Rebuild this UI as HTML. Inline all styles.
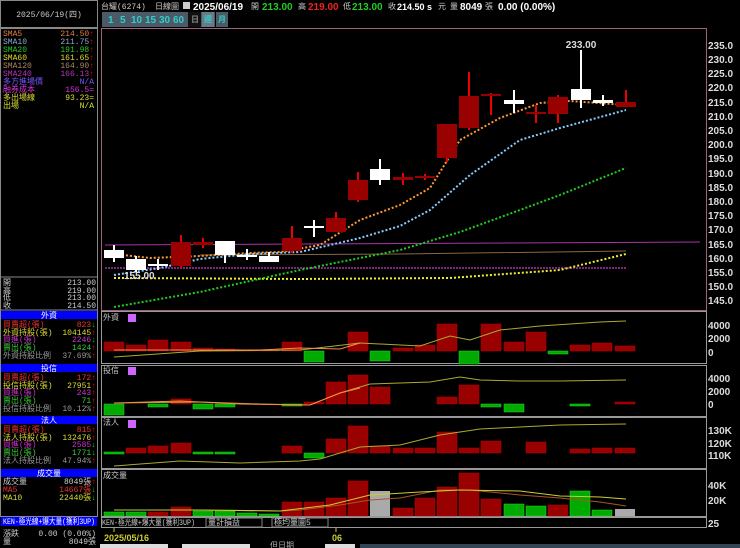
<!DOCTYPE html><html><head><meta charset="utf-8"><style>
body{margin:0;background:#000;width:740px;height:548px;overflow:hidden;font-family:"Liberation Sans","Noto Sans CJK TC",sans-serif}
svg{position:absolute;left:0;top:0}
.t{font-family:"Liberation Mono","Noto Sans CJK TC",monospace;font-size:8px}
.ax{font-family:"Liberation Sans",sans-serif;font-size:10px;font-weight:bold;fill:#ddd}
</style></head><body>
<svg width="740" height="548" viewBox="0 0 740 548">
<rect x="0.5" y="0.5" width="97" height="27" fill="none" stroke="#888"/>
<text x="49" y="17" class="t" fill="#ccc" text-anchor="middle">2025/06/19(四)</text>
<rect x="0.5" y="28.5" width="97" height="488" fill="none" stroke="#888"/>
<g class="t">
<text x="3" y="36" fill="#e08040">SMA5</text><text x="94" y="36" fill="#e08040" text-anchor="end">214.50<tspan fill="#f00">↑</tspan></text>
<text x="3" y="44" fill="#8ac">SMA10</text><text x="94" y="44" fill="#8ac" text-anchor="end">211.75<tspan fill="#f00">↑</tspan></text>
<text x="3" y="52" fill="#2c2">SMA20</text><text x="94" y="52" fill="#2c2" text-anchor="end">191.98<tspan fill="#f00">↑</tspan></text>
<text x="3" y="60" fill="#dd3">SMA60</text><text x="94" y="60" fill="#dd3" text-anchor="end">161.65<tspan fill="#f00">↑</tspan></text>
<text x="3" y="68" fill="#a86">SMA120</text><text x="94" y="68" fill="#a86" text-anchor="end">164.90<tspan fill="#f00">↑</tspan></text>
<text x="3" y="76" fill="#b3b">SMA240</text><text x="94" y="76" fill="#b3b" text-anchor="end">166.13<tspan fill="#f00">↑</tspan></text>
<text x="3" y="84" fill="#75f">多方進場價</text><text x="94" y="84" fill="#75f" text-anchor="end">N/A</text>
<text x="3" y="92" fill="#d3d">融券成本</text><text x="94" y="92" fill="#d3d" text-anchor="end">156.5=</text>
<text x="3" y="100" fill="#dd3">多出場線</text><text x="94" y="100" fill="#dd3" text-anchor="end">93.23=</text>
<text x="3" y="108" fill="#dd3">出場</text><text x="94" y="108" fill="#dd3" text-anchor="end">N/A</text>
</g>
<line x1="0" y1="277" x2="98" y2="277" stroke="#888"/>
<g class="t" fill="#ccc">
<text x="3" y="285">開</text><text x="96" y="285" text-anchor="end">213.00</text>
<text x="3" y="293">高</text><text x="96" y="293" text-anchor="end">219.00</text>
<text x="3" y="300">低</text><text x="96" y="300" text-anchor="end">213.00</text>
<text x="3" y="308">收</text><text x="96" y="308" text-anchor="end">214.50</text>
</g>
<line x1="0" y1="310" x2="98" y2="310" stroke="#888"/>
<g class="t" font-size="7.5">
<rect x="1" y="311" width="96" height="8" fill="#00f"/><text x="49" y="318" fill="#fff" text-anchor="middle">外資</text>
<text x="3" y="327" fill="#e33">買賣超(張)</text><text x="96" y="327" fill="#e33" text-anchor="end">823<tspan fill="#0c0">↓</tspan></text>
<text x="3" y="335" fill="#dd3">外資持股(張)</text><text x="96" y="335" fill="#dd3" text-anchor="end">104145<tspan fill="#f00">↑</tspan></text>
<text x="3" y="342" fill="#c3c">買進(張)</text><text x="96" y="342" fill="#c3c" text-anchor="end">2246<tspan fill="#0c0">↓</tspan></text>
<text x="3" y="350" fill="#3c3">賣出(張)</text><text x="96" y="350" fill="#3c3" text-anchor="end">1424<tspan fill="#f00">↑</tspan></text>
<text x="3" y="358" fill="#999">外資持股比例</text><text x="96" y="358" fill="#999" text-anchor="end">37.69%<tspan fill="#f00">↑</tspan></text>
<rect x="1" y="364" width="96" height="8" fill="#00f"/><text x="49" y="371" fill="#fff" text-anchor="middle">投信</text>
<text x="3" y="380" fill="#e33">買賣超(張)</text><text x="96" y="380" fill="#e33" text-anchor="end">172<tspan fill="#f00">↑</tspan></text>
<text x="3" y="388" fill="#dd3">投信持股(張)</text><text x="96" y="388" fill="#dd3" text-anchor="end">27951<tspan fill="#f00">↑</tspan></text>
<text x="3" y="395" fill="#c3c">買進(張)</text><text x="96" y="395" fill="#c3c" text-anchor="end">243<tspan fill="#f00">↑</tspan></text>
<text x="3" y="403" fill="#3c3">賣出(張)</text><text x="96" y="403" fill="#3c3" text-anchor="end">71<tspan fill="#f00">↑</tspan></text>
<text x="3" y="411" fill="#999">投信持股比例</text><text x="96" y="411" fill="#999" text-anchor="end">10.12%<tspan fill="#f00">↑</tspan></text>
<rect x="1" y="416" width="96" height="8" fill="#00f"/><text x="49" y="423" fill="#fff" text-anchor="middle">法人</text>
<text x="3" y="432" fill="#e33">買賣超(張)</text><text x="96" y="432" fill="#e33" text-anchor="end">815<tspan fill="#f00">↑</tspan></text>
<text x="3" y="440" fill="#dd3">法人持股(張)</text><text x="96" y="440" fill="#dd3" text-anchor="end">132476<tspan fill="#f00">↑</tspan></text>
<text x="3" y="447" fill="#c3c">買進(張)</text><text x="96" y="447" fill="#c3c" text-anchor="end">2585<tspan fill="#0c0">↓</tspan></text>
<text x="3" y="455" fill="#3c3">賣出(張)</text><text x="96" y="455" fill="#3c3" text-anchor="end">1771<tspan fill="#0c0">↓</tspan></text>
<text x="3" y="463" fill="#999">法人持股比例</text><text x="96" y="463" fill="#999" text-anchor="end">47.94%<tspan fill="#f00">↑</tspan></text>
<rect x="1" y="469" width="96" height="8" fill="#00f"/><text x="49" y="476" fill="#fff" text-anchor="middle">成交量</text>
<text x="3" y="484" fill="#ccc">成交量</text><text x="96" y="484" fill="#ccc" text-anchor="end">8049張<tspan fill="#f00">↑</tspan></text>
<text x="3" y="492" fill="#e33">MA5</text><text x="96" y="492" fill="#e33" text-anchor="end">14667張<tspan fill="#0c0">↓</tspan></text>
<text x="3" y="500" fill="#dd3">MA10</text><text x="96" y="500" fill="#dd3" text-anchor="end">22440張<tspan fill="#0c0">↓</tspan></text>
<rect x="1" y="517" width="96" height="9" fill="#00f"/><text x="3" y="524" fill="#fff" textLength="92" lengthAdjust="spacingAndGlyphs">KEN-極光線+爆大量(獲利3UP)</text>
<text x="3" y="536" fill="#ccc">漲跌</text><text x="96" y="536" fill="#ccc" text-anchor="end">0.00 (0.00%)</text>
<text x="3" y="544" fill="#ccc">量</text><text x="96" y="544" fill="#ccc" text-anchor="end">8049張</text>
</g>
<g font-size="9">
<text x="101" y="9" class="t" fill="#ccc">台耀(6274)</text>
<text x="155" y="9" class="t" fill="#ccc">日線圖</text>
<rect x="183" y="2" width="7" height="7" fill="#ccc"/>
<text x="193" y="10" fill="#fff" font-weight="bold" font-size="10">2025/06/19</text>
<text x="251" y="9" class="t" fill="#ccc">開</text><text x="262" y="10" fill="#2c2" font-weight="bold" font-size="10">213.00</text>
<text x="298" y="9" class="t" fill="#ccc">高</text><text x="308" y="10" fill="#e22" font-weight="bold" font-size="10">219.00</text>
<text x="343" y="9" class="t" fill="#ccc">低</text><text x="352" y="10" fill="#2c2" font-weight="bold" font-size="10">213.00</text>
<text x="388" y="9" class="t" fill="#ccc">收</text><text x="397" y="10" fill="#fff" font-weight="bold" font-size="9">214.50 s</text>
<text x="438" y="9" class="t" fill="#ccc">元</text><text x="450" y="9" class="t" fill="#ccc">量</text>
<text x="460" y="10" fill="#fff" font-weight="bold" font-size="10">8049</text>
<text x="485" y="9" class="t" fill="#ccc">張</text>
<text x="498" y="10" fill="#fff" font-weight="bold" font-size="10">0.00 (0.00%)</text>
</g>
<g font-size="10" font-weight="bold" fill="#3cc">
<rect x="102" y="12" width="113" height="15" fill="#4a5a66"/>
<text x="108" y="23">1</text><text x="120" y="23">5</text><text x="131" y="23">10</text><text x="145" y="23">15</text><text x="159" y="23">30</text><text x="173" y="23">60</text>
<rect x="188" y="12" width="13" height="15" fill="#111"/><text x="191" y="22" class="t" fill="#888">日</text>
<rect x="202" y="12" width="12" height="15" fill="#6a7a86"/><text x="204" y="22" class="t" fill="#3cc">週</text>
<rect x="216" y="12" width="12" height="15" fill="#4a5a66"/><text x="218" y="22" class="t" fill="#3cc">月</text>
</g>
<rect x="101.5" y="28.5" width="605" height="282" fill="none" stroke="#a0607a"/>
<rect x="101.5" y="311.5" width="605" height="52" fill="none" stroke="#999"/>
<rect x="101.5" y="365.5" width="605" height="51" fill="none" stroke="#999"/>
<rect x="101.5" y="417.5" width="605" height="51" fill="none" stroke="#999"/>
<rect x="101.5" y="469.5" width="605" height="47" fill="none" stroke="#999"/>
<rect x="101.5" y="517.5" width="605" height="10" fill="none" stroke="#999"/>
<g class="ax">
<text x="708" y="49">235.0</text><text x="708" y="63">230.0</text><text x="708" y="77">225.0</text><text x="708" y="91">220.0</text><text x="708" y="106">215.0</text><text x="708" y="120">210.0</text><text x="708" y="134">205.0</text><text x="708" y="148">200.0</text><text x="708" y="162">195.0</text><text x="708" y="177">190.0</text><text x="708" y="191">185.0</text><text x="708" y="205">180.0</text><text x="708" y="219">175.0</text><text x="708" y="233">170.0</text><text x="708" y="248">165.0</text><text x="708" y="262">160.0</text><text x="708" y="276">155.0</text><text x="708" y="290">150.0</text><text x="708" y="304">145.0</text>
<text x="708" y="329">4000</text><text x="708" y="342">2000</text><text x="708" y="356">0</text>
<text x="708" y="382">4000</text><text x="708" y="395">2000</text><text x="708" y="408">0</text>
<text x="708" y="434">130K</text><text x="708" y="447">120K</text><text x="708" y="459">110K</text>
<text x="708" y="489">40K</text><text x="708" y="504">20K</text><text x="708" y="527">25</text>
</g>
<polyline points="105,245 700,242" stroke="#a3a" stroke-width="1" fill="none"/>
<polyline points="105,268 626,268" stroke="#a3a" stroke-width="1.5" stroke-dasharray="2,1" fill="none"/>
<polyline points="200,255 400,254 626,251" stroke="#864" fill="none"/>
<polyline points="114,278 300,279 450,278 560,270 626,254" stroke="#ee3" stroke-width="2" stroke-dasharray="2,2" fill="none"/>
<polyline points="114,307 200,292 300,270 400,250 460,232 520,210 560,195 626,168" stroke="#2c2" stroke-width="2" stroke-dasharray="2,2" fill="none"/>
<polyline points="114,275 160,268 200,259 250,254 300,252 360,238 400,226 430,210 470,175 520,140 560,128 626,110" stroke="#8cf" stroke-width="2" stroke-dasharray="2,2" fill="none"/>
<polyline points="114,254 150,258 200,256 250,253 280,252 320,245 360,220 400,205 430,188 460,140 500,118 540,103 570,101 626,105" stroke="#f93" stroke-width="2" stroke-dasharray="2,2" fill="none"/>
<g stroke-width="2">
<line x1="114" y1="245" x2="114" y2="262" stroke="#fff"/><rect x="104" y="250" width="20" height="8" fill="#fff"/>
<line x1="136" y1="256" x2="136" y2="272" stroke="#fff"/><rect x="126" y="259" width="20" height="11" fill="#fff"/>
<line x1="158" y1="259" x2="158" y2="270" stroke="#fff"/><rect x="148" y="264" width="20" height="2" fill="#fff"/>
<line x1="181" y1="235" x2="181" y2="268" stroke="#e00"/><rect x="171" y="242" width="20" height="24" fill="#900"/>
<line x1="203" y1="238" x2="203" y2="248" stroke="#e00"/><rect x="193" y="242" width="20" height="3" fill="#900"/>
<line x1="225" y1="241" x2="225" y2="263" stroke="#fff"/><rect x="215" y="241" width="20" height="14" fill="#fff"/>
<line x1="247" y1="249" x2="247" y2="260" stroke="#fff"/><rect x="237" y="255" width="20" height="2" fill="#fff"/>
<line x1="269" y1="252" x2="269" y2="262" stroke="#fff"/><rect x="259" y="256" width="20" height="6" fill="#fff"/>
<line x1="292" y1="226" x2="292" y2="253" stroke="#e00"/><rect x="282" y="238" width="20" height="13" fill="#900"/>
<line x1="314" y1="220" x2="314" y2="237" stroke="#fff"/><rect x="304" y="226" width="20" height="2" fill="#fff"/>
<line x1="336" y1="212" x2="336" y2="232" stroke="#e00"/><rect x="326" y="218" width="20" height="14" fill="#900"/>
<line x1="358" y1="172" x2="358" y2="202" stroke="#e00"/><rect x="348" y="180" width="20" height="20" fill="#900"/>
<line x1="380" y1="159" x2="380" y2="185" stroke="#fff"/><rect x="370" y="169" width="20" height="11" fill="#fff"/>
<line x1="403" y1="173" x2="403" y2="185" stroke="#e00"/><rect x="393" y="177" width="20" height="3" fill="#900"/>
<line x1="425" y1="174" x2="425" y2="180" stroke="#e00"/><rect x="415" y="176" width="20" height="2" fill="#900"/>
<line x1="447" y1="124" x2="447" y2="162" stroke="#e00"/><rect x="437" y="124" width="20" height="34" fill="#900"/>
<line x1="469" y1="72" x2="469" y2="130" stroke="#e00"/><rect x="459" y="96" width="20" height="32" fill="#900"/>
<line x1="491" y1="93" x2="491" y2="115" stroke="#e00"/><rect x="481" y="94" width="20" height="2" fill="#900"/>
<line x1="514" y1="90" x2="514" y2="113" stroke="#fff"/><rect x="504" y="100" width="20" height="4" fill="#fff"/>
<line x1="536" y1="105" x2="536" y2="123" stroke="#e00"/><rect x="526" y="112" width="20" height="2" fill="#900"/>
<line x1="558" y1="95" x2="558" y2="123" stroke="#e00"/><rect x="548" y="97" width="20" height="17" fill="#900"/>
<line x1="581" y1="50" x2="581" y2="108" stroke="#fff"/><rect x="571" y="89" width="20" height="11" fill="#fff"/>
<line x1="603" y1="95" x2="603" y2="106" stroke="#fff"/><rect x="593" y="100" width="20" height="3" fill="#fff"/>
<line x1="626" y1="90" x2="626" y2="106" stroke="#e00"/><rect x="616" y="102" width="20" height="5" fill="#900"/>
</g>
<text x="581" y="48" class="ax" text-anchor="middle" font-size="9">233.00</text>
<text x="124" y="279" class="ax" font-size="9" fill="#ccc">155.00</text>
<g class="t" fill="#ccc"><text x="103" y="320">外資</text><text x="103" y="373">投信</text><text x="103" y="425">法人</text><text x="103" y="478">成交量</text></g>
<rect x="128" y="314" width="8" height="8" fill="#c6f"/><rect x="128" y="367" width="8" height="8" fill="#c6f"/><rect x="128" y="420" width="8" height="8" fill="#c6f"/>
<g fill="#900" stroke="#b00" stroke-width="0.5">
<rect x="104" y="342" width="20" height="9"/><rect x="126" y="345" width="20" height="6"/><rect x="148" y="340" width="20" height="11"/><rect x="171" y="342" width="20" height="9"/><rect x="193" y="348" width="20" height="3"/><rect x="215" y="349" width="20" height="2"/><rect x="237" y="350" width="20" height="1"/><rect x="259" y="350" width="20" height="1"/><rect x="282" y="342" width="20" height="9"/><rect x="348" y="332" width="20" height="19"/><rect x="393" y="348" width="20" height="3"/><rect x="415" y="345" width="20" height="6"/><rect x="437" y="324" width="20" height="27"/><rect x="481" y="324" width="20" height="27"/><rect x="504" y="342" width="20" height="9"/><rect x="526" y="332" width="20" height="19"/><rect x="570" y="345" width="20" height="6"/><rect x="592" y="343" width="20" height="8"/><rect x="615" y="346" width="20" height="5"/>
</g>
<g fill="#0a0" stroke="#2d2" stroke-width="0.5"><rect x="304" y="351" width="20" height="11"/><rect x="370" y="351" width="20" height="10"/><rect x="459" y="351" width="20" height="13"/><rect x="548" y="351" width="20" height="3"/></g>
<polyline points="114,357 200,351 300,350 360,343 420,346 450,336 470,340 500,330 540,326 600,322 626,321" stroke="#aa3" fill="none"/>
<polyline points="114,350 200,350 260,350 300,348 340,349 360,343" stroke="#f84" fill="none"/>
<g fill="#900" stroke="#b00" stroke-width="0.5">
<rect x="171" y="399" width="20" height="5"/><rect x="304" y="402" width="20" height="2"/><rect x="326" y="382" width="20" height="22"/><rect x="348" y="375" width="20" height="29"/><rect x="370" y="387" width="20" height="17"/><rect x="437" y="397" width="20" height="7"/><rect x="459" y="385" width="20" height="19"/><rect x="615" y="402" width="20" height="2"/>
</g>
<g fill="#0a0" stroke="#2d2" stroke-width="0.5"><rect x="104" y="404" width="20" height="11"/><rect x="148" y="404" width="20" height="3"/><rect x="193" y="404" width="20" height="5"/><rect x="215" y="404" width="20" height="3"/><rect x="282" y="404" width="20" height="2"/><rect x="481" y="404" width="20" height="3"/><rect x="504" y="404" width="20" height="8"/><rect x="570" y="404" width="20" height="2"/></g>
<polyline points="114,403 200,402 260,404 310,405 340,393 370,384 400,383 430,382 460,377 480,380 520,381 560,381 626,380" stroke="#aa3" fill="none"/>
<polyline points="114,403 180,401 240,404 310,405 340,393 360,388" stroke="#f84" fill="none"/>
<g fill="#900" stroke="#b00" stroke-width="0.5">
<rect x="126" y="448" width="20" height="5"/><rect x="148" y="446" width="20" height="7"/><rect x="171" y="443" width="20" height="10"/><rect x="282" y="446" width="20" height="7"/><rect x="326" y="439" width="20" height="14"/><rect x="348" y="426" width="20" height="27"/><rect x="370" y="446" width="20" height="7"/><rect x="393" y="448" width="20" height="5"/><rect x="415" y="448" width="20" height="5"/><rect x="437" y="432" width="20" height="21"/><rect x="459" y="448" width="20" height="5"/><rect x="481" y="441" width="20" height="12"/><rect x="526" y="442" width="20" height="11"/><rect x="570" y="449" width="20" height="4"/><rect x="592" y="448" width="20" height="5"/><rect x="615" y="448" width="20" height="5"/>
</g>
<g fill="#0a0" stroke="#2d2" stroke-width="0.5"><rect x="104" y="452" width="20" height="2"/><rect x="193" y="452" width="20" height="2"/><rect x="215" y="452" width="20" height="2"/><rect x="304" y="453" width="20" height="5"/></g>
<polyline points="114,466 180,461 240,463 300,461 320,459 360,447 400,445 440,435 480,429 520,427 560,425 626,424" stroke="#aa3" fill="none"/>
<g fill="#900" stroke="#b00" stroke-width="0.5">
<rect x="148" y="512" width="20" height="4"/><rect x="171" y="507" width="20" height="9"/><rect x="282" y="502" width="20" height="14"/><rect x="304" y="502" width="20" height="14"/><rect x="326" y="498" width="20" height="18"/><rect x="348" y="481" width="20" height="35"/><rect x="393" y="508" width="20" height="8"/><rect x="415" y="498" width="20" height="18"/><rect x="437" y="487" width="20" height="29"/><rect x="459" y="473" width="20" height="43"/><rect x="481" y="499" width="20" height="17"/><rect x="548" y="505" width="20" height="11"/>
</g>
<g fill="#0a0" stroke="#2d2" stroke-width="0.5"><rect x="104" y="512" width="20" height="4"/><rect x="126" y="512" width="20" height="4"/><rect x="193" y="511" width="20" height="5"/><rect x="215" y="511" width="20" height="5"/><rect x="237" y="513" width="20" height="3"/><rect x="259" y="514" width="20" height="2"/><rect x="504" y="504" width="20" height="12"/><rect x="526" y="506" width="20" height="10"/><rect x="570" y="491" width="20" height="25"/><rect x="592" y="510" width="20" height="6"/></g>
<g fill="#aaa"><rect x="370" y="491" width="20" height="25"/><rect x="615" y="509" width="20" height="7"/></g>
<polyline points="114,510 200,510 280,511 300,510 340,505 370,500 400,498 440,490 470,490 520,495 560,498 600,502 626,506" stroke="#a52" fill="none"/>
<polyline points="114,510 200,510 280,511 330,505 370,495 420,492 460,490 520,491 560,496 600,497 626,499" stroke="#cc3" fill="none"/>
<text x="102" y="525" class="t" fill="#ccc" font-size="7" textLength="93" lengthAdjust="spacingAndGlyphs">KEN-極光線+爆大量(獲利3UP)</text>
<rect x="206" y="518" width="56" height="9" fill="none" stroke="#888"/><text x="208" y="525" class="t" fill="#ccc" font-size="7">量計損益</text>
<rect x="272" y="518" width="56" height="9" fill="none" stroke="#888"/><text x="274" y="525" class="t" fill="#ccc" font-size="7">極均量圖5</text>
<line x1="114" y1="528" x2="114" y2="532" stroke="#cc3"/><line x1="336" y1="528" x2="336" y2="532" stroke="#cc3"/>
<text x="104" y="541" fill="#cc3" font-size="9" font-weight="bold">2025/05/16</text>
<text x="332" y="541" fill="#cc3" font-size="9" font-weight="bold">06</text>
<rect x="100" y="544" width="68" height="4" fill="#ddd"/><rect x="182" y="544" width="68" height="4" fill="#ddd"/>
<text x="270" y="548" class="t" fill="#aaa">但日期</text><rect x="325" y="544" width="30" height="4" fill="#ddd"/>
<rect x="360" y="544" width="380" height="4" fill="#345"/>
</svg>
</body></html>
